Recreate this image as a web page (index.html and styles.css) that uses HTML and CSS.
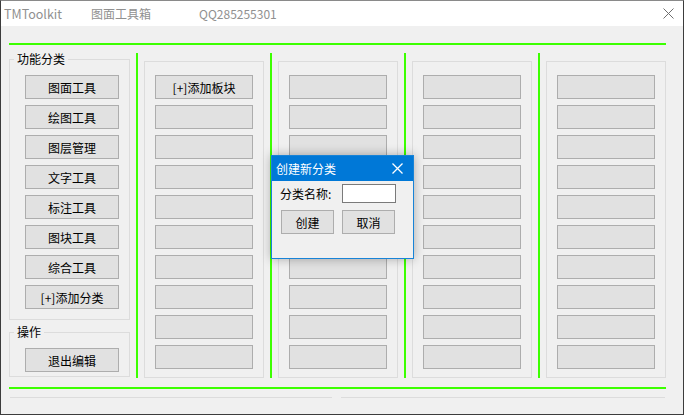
FILE: index.html
```html
<!DOCTYPE html>
<html lang="zh-CN">
<head>
  <meta charset="UTF-8">
  <title>TMToolkit</title>
  <link rel="stylesheet" href="styles.css">
</head>
<body>
  <div class="window">
    <div class="titlebar">
      <span class="app-name">TMToolkit</span>
      <span class="app-title">图面工具箱</span>
      <span class="app-qq">QQ285255301</span>
      <svg class="win-close" width="11" height="11" viewBox="0 0 11 11">
        <path d="M0.5 0.5 L10.5 10.5 M10.5 0.5 L0.5 10.5" stroke="#6e6e6e" stroke-width="1" fill="none"/>
      </svg>
    </div>

    <div class="main">
      <div class="green-h"></div>

      <div class="columns">
        <div class="side">
          <fieldset class="group group-cats">
            <legend>功能分类</legend>
            <button class="btn">图面工具</button>
            <button class="btn">绘图工具</button>
            <button class="btn">图层管理</button>
            <button class="btn">文字工具</button>
            <button class="btn">标注工具</button>
            <button class="btn">图块工具</button>
            <button class="btn">综合工具</button>
            <button class="btn">[+]添加分类</button>
          </fieldset>
          <fieldset class="group group-ops">
            <legend>操作</legend>
            <button class="btn">退出编辑</button>
          </fieldset>
        </div>

        <div class="green-v"></div>
        <div class="panel">
          <button class="btn wide">[+]添加板块</button>
          <button class="btn wide"></button>
          <button class="btn wide"></button>
          <button class="btn wide"></button>
          <button class="btn wide"></button>
          <button class="btn wide"></button>
          <button class="btn wide"></button>
          <button class="btn wide"></button>
          <button class="btn wide"></button>
          <button class="btn wide"></button>
        </div>

        <div class="green-v"></div>
        <div class="panel">
          <button class="btn wide"></button>
          <button class="btn wide"></button>
          <button class="btn wide"></button>
          <button class="btn wide"></button>
          <button class="btn wide"></button>
          <button class="btn wide"></button>
          <button class="btn wide"></button>
          <button class="btn wide"></button>
          <button class="btn wide"></button>
          <button class="btn wide"></button>
        </div>

        <div class="green-v"></div>
        <div class="panel">
          <button class="btn wide"></button>
          <button class="btn wide"></button>
          <button class="btn wide"></button>
          <button class="btn wide"></button>
          <button class="btn wide"></button>
          <button class="btn wide"></button>
          <button class="btn wide"></button>
          <button class="btn wide"></button>
          <button class="btn wide"></button>
          <button class="btn wide"></button>
        </div>

        <div class="green-v"></div>
        <div class="panel">
          <button class="btn wide"></button>
          <button class="btn wide"></button>
          <button class="btn wide"></button>
          <button class="btn wide"></button>
          <button class="btn wide"></button>
          <button class="btn wide"></button>
          <button class="btn wide"></button>
          <button class="btn wide"></button>
          <button class="btn wide"></button>
          <button class="btn wide"></button>
        </div>
      </div>

      <div class="green-h bottom"></div>

      <div class="statusbar">
        <div class="status-seg first"></div>
        <div class="status-seg second"></div>
      </div>
    </div>

    <div class="dialog">
      <div class="dialog-title">
        <span>创建新分类</span>
        <svg width="11" height="11" viewBox="0 0 11 11">
          <path d="M0.5 0.5 L10.5 10.5 M10.5 0.5 L0.5 10.5" stroke="#fff" stroke-width="1.3" fill="none"/>
        </svg>
      </div>
      <div class="dialog-body">
        <div class="dialog-row">
          <label>分类名称:</label>
          <input type="text" class="name-input">
        </div>
        <div class="dialog-row buttons">
          <button class="btn small">创建</button>
          <button class="btn small">取消</button>
        </div>
      </div>
    </div>
  </div>
</body>
</html>
```

FILE: styles.css
```css
body {
  margin: 0;
  font-family: "Noto Sans CJK SC", "Noto Sans", sans-serif;
  font-size: 12px;
  color: #000;
  background-color: #fff;
}

.window {
  position: relative;
  width: 684px;
  height: 415px;
  box-sizing: border-box;
  border: 1px solid #3c3c3c;
  border-top-color: #8a8a8a;
  background-color: #f0f0f0;
  overflow: hidden;
}

.titlebar {
  height: 25px;
  background-color: #fff;
  display: flex;
  align-items: center;
  padding-left: 3px;
  color: #909090;
  font-size: 12.5px;
}

.app-name {
  width: 87px;
}

.app-title {
  width: 108px;
  font-size: 12px;
}

.app-qq {
  flex: 1;
  font-size: 12px;
}

.win-close {
  margin-right: 9px;
}

.main {
  padding: 17px 0 0 8px;
}

.green-h {
  width: 657px;
  height: 2px;
  background-color: #3cff00;
}

.green-h.bottom {
  margin-top: 9px;
}

.columns {
  display: flex;
  gap: 6px;
  margin-top: 8px;
  height: 325px;
}

.green-v {
  width: 2px;
  height: 325px;
  background-color: #3cff00;
}

.side {
  width: 121px;
}

.group {
  margin: 0;
  padding: 0 0 0 15px;
  border: 1px solid #dcdcdc;
  min-width: 0;
  box-sizing: border-box;
  width: 121px;
  display: flex;
  flex-direction: column;
  gap: 6px;
}

.group legend {
  margin-left: -11px;
  padding: 0 3px;
  font-size: 12px;
  line-height: 12px;
  height: 12px;
}

.group-cats {
  height: 267px;
  padding-top: 10px;
}

.group-ops {
  margin-top: 6px;
  height: 51px;
  padding-top: 10px;
}

.panel {
  width: 120px;
  height: 317px;
  margin-top: 8px;
  box-sizing: border-box;
  border: 1px solid #dcdcdc;
  padding: 13px 0 0 10px;
  display: flex;
  flex-direction: column;
  gap: 6px;
}

.btn {
  width: 94px;
  height: 24px;
  box-sizing: border-box;
  border: 1px solid #adadad;
  background-color: #e1e1e1;
  font-family: "Noto Sans CJK SC", "Noto Sans", sans-serif;
  font-size: 12px;
  color: #000;
  padding: 0;
  margin: 0;
  flex-shrink: 0;
}

.btn.wide {
  width: 98px;
}

.btn.small {
  width: 53px;
}

.statusbar {
  display: flex;
  margin-top: 8px;
}

.status-seg {
  height: 0;
  border-top: 1px solid #dcdcdc;
}

.status-seg.first {
  margin-left: 1px;
  width: 322px;
}

.status-seg.second {
  margin-left: 9px;
  width: 324px;
}

.dialog {
  position: absolute;
  left: 270px;
  top: 154px;
  width: 143px;
  height: 104px;
  box-sizing: border-box;
  border: 1px solid #1883d7;
  background-color: #f0f0f0;
  box-shadow: 0 0 10px rgba(0, 0, 0, 0.3);
}

.dialog-title {
  height: 25px;
  background-color: #0078d7;
  color: #fff;
  display: flex;
  align-items: center;
  justify-content: space-between;
  padding: 0 10px 0 4px;
  font-size: 12px;
}

.dialog-body {
  padding: 3px 0 0 8px;
}

.dialog-row {
  display: flex;
  align-items: center;
}

.dialog-row label {
  width: 62px;
}

.name-input {
  width: 54px;
  height: 19px;
  box-sizing: border-box;
  border: 1px solid #7a7a7a;
  background-color: #fff;
  padding: 0;
  margin: 0;
}

.dialog-row.buttons {
  margin-top: 7px;
  margin-left: 1px;
  gap: 8px;
}
```
